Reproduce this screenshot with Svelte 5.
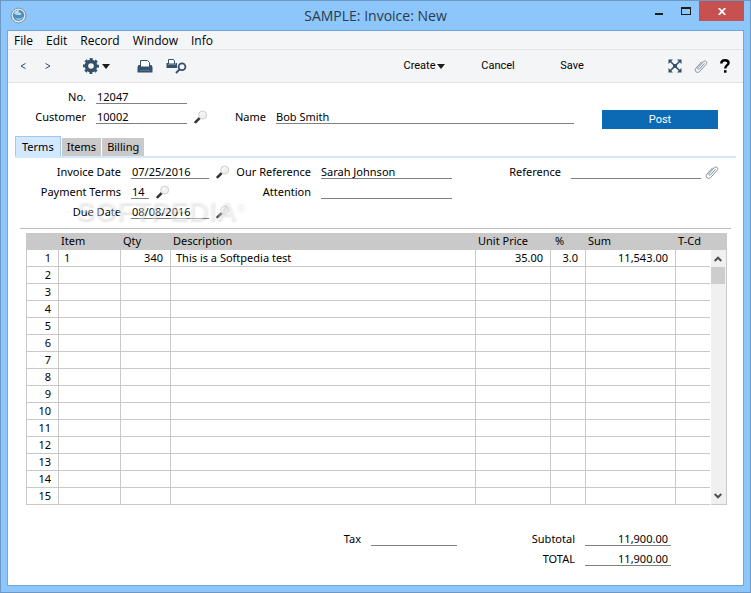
<script lang="ts">
    const menus = ["File", "Edit", "Record", "Window", "Info"];
    const tabs = ["Terms", "Items", "Billing"];
    const totalRows = 15;

    let activeTab = $state("Terms");

    let invoice = $state({
        number: "12047",
        customer: "10002",
        name: "Bob Smith",
        date: "07/25/2016",
        terms: "14",
        due: "08/08/2016",
        ourReference: "Sarah Johnson",
        attention: "",
        reference: "",
        tax: "",
        subtotal: "11,900.00",
        total: "11,900.00",
    });

    const lines = [
        {
            item: "1",
            qty: "340",
            description: "This is a Softpedia test",
            price: "35.00",
            percent: "3.0",
            sum: "11,543.00",
            code: "",
        },
    ];

    const rows = Array.from({ length: totalRows }, (_, i) => lines[i] ?? null);
</script>

{#snippet lens(label)}
    <button class="lens" aria-label={label}>
        <svg width="14" height="14" viewBox="0 0 14 14">
            <path d="M1.6 12.2 5.6 8.2" stroke="#333" stroke-width="2.6" stroke-linecap="round" />
            <circle cx="8.7" cy="5" r="4" fill="#f1f1f1" stroke="#d0d0d0" />
            <path d="M6.6 4.6a2.4 2.4 0 0 1 2.6-1.9" fill="none" stroke="#fff" />
        </svg>
    </button>
{/snippet}

{#snippet clip()}
    <svg width="14" height="15" viewBox="0 0 14 15" fill="none" stroke="#8390a0" stroke-linecap="round">
        <path d="M10.2 4.6 5.4 10c-.9 1-2.300-.2-1.400-1.300l5.300-6c1.800-1.900 4.700.4 2.900 2.500l-6.400 7.200c-2.500 2.700-6.200-.5-3.800-3.300L7.400 3" />
    </svg>
{/snippet}

{#snippet caret()}
    <svg width="8" height="5" viewBox="0 0 8 5"><path d="M0 0h8L4 5z" fill="#1c1c1c" /></svg>
{/snippet}

<div class="window">
    <header class="titlebar">
        <svg class="logo" width="17" height="17" viewBox="0 0 17 17">
            <circle cx="8.5" cy="8.5" r="7.4" fill="#dfe6ec" stroke="#8593a0" />
            <circle cx="8.5" cy="8.3" r="5.6" fill="#4a8fc0" />
            <path d="M4 6c1-2 3-3 5-3-1 2 0 3 2 3 1 1 0 2-1 2-3 0-5 0-6-2z" fill="#b4dbf0" />
            <path d="M5 10c2 2 5 2 8 0-1 3-6 5-8 0z" fill="#9acbe9" />
        </svg>
        <h1>SAMPLE: Invoice: New</h1>
        <div class="controls">
            <button class="control" aria-label="Minimize">
                <svg width="10" height="10" viewBox="0 0 10 10"><path d="M1 7h8v2H1z" fill="#1c1c1c" /></svg>
            </button>
            <button class="control" aria-label="Maximize">
                <svg width="10" height="10" viewBox="0 0 10 10"><path d="M0 1h10v8H0zM1 3v5h8V3z" fill="#1c1c1c" fill-rule="evenodd" /></svg>
            </button>
            <button class="close" aria-label="Close">
                <svg width="8" height="7" viewBox="0 0 8 7"><path d="M.7 0 7.3 7M7.3 0 .7 7" stroke="#fff" stroke-width="1.8" /></svg>
            </button>
        </div>
    </header>

    <main>
        <nav class="menubar">
            {#each menus as menu}
                <button>{menu}</button>
            {/each}
        </nav>

        <div class="toolbar">
            <div class="nav">
                <button aria-label="Previous">
                    <svg width="6" height="6" viewBox="0 0 6 6"><path d="M5.5.5 1 3l4.500 2.500" fill="none" stroke="#34506b" /></svg>
                </button>
                <button aria-label="Next">
                    <svg width="6" height="6" viewBox="0 0 6 6"><path d="M.5.5 5 3 .5 5.500" fill="none" stroke="#34506b" /></svg>
                </button>
            </div>
            <button class="gear" aria-label="Options">
                <svg width="16" height="16" viewBox="0 0 16 16" fill="none" stroke="#34506b">
                    <circle cx="8" cy="8" r="4.6" stroke-width="3.6" />
                    <circle cx="8" cy="8" r="6.9" stroke-width="2.2" stroke-dasharray="2.9 2.519" stroke-dashoffset="1.45" />
                </svg>
                {@render caret()}
            </button>
            <button class="print" aria-label="Print">
                <svg width="16" height="13" viewBox="0 0 16 13">
                    <path d="M3.500 7V.5h7l2 2V7z" fill="#fff" stroke="#34506b" />
                    <path d="M1.500 5H3v2h10V5h1.500L15.500 7v5.500H.5V7z" fill="#34506b" />
                    <path d="M3 10.500h10" stroke="#5d758b" />
                </svg>
            </button>
            <button aria-label="Print preview">
                <svg width="21" height="15" viewBox="0 0 21 15">
                    <path d="M2.500 5V.5h5l1 1.500v3z" fill="#fff" stroke="#34506b" />
                    <path d="M.5 4H2v1.500h7.500V4H11v5H.5z" fill="#34506b" />
                    <circle cx="16" cy="7.8" r="3.4" fill="#f4f5f7" stroke="#34506b" stroke-width="1.8" />
                    <path d="m13.500 10.400-3.500 3.600" stroke="#34506b" stroke-width="2" />
                </svg>
            </button>
            <div class="actions">
                <button class="create">Create{@render caret()}</button>
                <button>Cancel</button>
                <button>Save</button>
            </div>
            <div class="tools">
                <button aria-label="Expand">
                    <svg width="14" height="14" viewBox="0 0 14 14">
                        <path d="M2 2l10 10M12 2 2 12" stroke="#34506b" stroke-width="1.6" />
                        <path d="M.5.5H5L.5 5zM13.500.5V5L9 .5zM.5 13.500V9L5 13.500zM13.500 13.500H9L13.500 9z" fill="#34506b" />
                        <path d="M5 5h4v4H5z" fill="#34506b" />
                    </svg>
                </button>
                <button aria-label="Attachments">{@render clip()}</button>
                <button aria-label="Help">
                    <svg width="10" height="14" viewBox="0 0 10 14">
                        <path d="M1.300 4.500C1.300 2.200 3 1.200 5 1.200c2.200 0 3.600 1.100 3.600 2.800C8.600 6.200 5.200 6.200 5.200 9.500" fill="none" stroke="#000" stroke-width="2.4" />
                        <path d="M4 11.200h2.500v2.500H4z" />
                    </svg>
                </button>
            </div>
        </div>

        <section class="head">
            <div class="fields">
                <div class="row">
                    <label for="number">No.</label>
                    <input id="number" class="code" bind:value={invoice.number} />
                </div>
                <div class="row">
                    <label for="customer">Customer</label>
                    <input id="customer" class="code" bind:value={invoice.customer} />
                    {@render lens("Find customer")}
                    <label for="name" class="name">Name</label>
                    <input id="name" class="grow" bind:value={invoice.name} />
                </div>
            </div>
            <button class="post">Post</button>
        </section>

        <div class="tabs" role="tablist">
            {#each tabs as tab}
                <button
                    role="tab"
                    aria-selected={activeTab === tab}
                    class:active={activeTab === tab}
                    onclick={() => (activeTab = tab)}>{tab}</button
                >
            {/each}
        </div>

        <section class="terms">
            <div class="dates">
                <div class="row">
                    <label for="date">Invoice Date</label>
                    <input id="date" class="date" bind:value={invoice.date} />
                    {@render lens("Pick invoice date")}
                </div>
                <div class="row">
                    <label for="terms">Payment Terms</label>
                    <input id="terms" class="days" bind:value={invoice.terms} />
                    {@render lens("Find payment terms")}
                </div>
                <div class="row">
                    <label for="due">Due Date</label>
                    <input id="due" class="date" bind:value={invoice.due} />
                    {@render lens("Pick due date")}
                </div>
                <div class="watermark" aria-hidden="true">SOFTPEDIA<sup>®</sup></div>
            </div>
            <div class="contacts">
                <div class="row">
                    <label for="our">Our Reference</label>
                    <input id="our" class="grow" bind:value={invoice.ourReference} />
                </div>
                <div class="row">
                    <label for="attention">Attention</label>
                    <input id="attention" class="grow" bind:value={invoice.attention} />
                </div>
            </div>
            <div class="reference">
                <div class="row">
                    <label for="reference">Reference</label>
                    <input id="reference" class="grow" bind:value={invoice.reference} />
                    <button class="attach" aria-label="Attach file">{@render clip()}</button>
                </div>
            </div>
        </section>

        <div class="grid">
            <table>
                <colgroup>
                    <col class="w-no" />
                    <col class="w-item" />
                    <col class="w-qty" />
                    <col />
                    <col class="w-price" />
                    <col class="w-percent" />
                    <col class="w-sum" />
                    <col class="w-code" />
                </colgroup>
                <thead>
                    <tr>
                        <th></th>
                        <th>Item</th>
                        <th>Qty</th>
                        <th>Description</th>
                        <th>Unit Price</th>
                        <th class="percent">%</th>
                        <th>Sum</th>
                        <th>T-Cd</th>
                    </tr>
                </thead>
                <tbody>
                    {#each rows as row, i}
                        <tr>
                            <td class="num">{i + 1}</td>
                            <td>{row?.item}</td>
                            <td class="num">{row?.qty}</td>
                            <td>{row?.description}</td>
                            <td class="num">{row?.price}</td>
                            <td class="num">{row?.percent}</td>
                            <td class="num">{row?.sum}</td>
                            <td>{row?.code}</td>
                        </tr>
                    {/each}
                </tbody>
            </table>
            <div class="side">
                <div class="corner"></div>
                <div class="scrollbar">
                    <button aria-label="Scroll up">
                        <svg width="8" height="6" viewBox="0 0 8 6"><path d="M.7 5 4 1.700 7.300 5" fill="none" stroke="#505050" stroke-width="2" /></svg>
                    </button>
                    <div class="thumb"></div>
                    <button class="down" aria-label="Scroll down">
                        <svg width="8" height="6" viewBox="0 0 8 6"><path d="M.7 1 4 4.300 7.300 1" fill="none" stroke="#505050" stroke-width="2" /></svg>
                    </button>
                </div>
            </div>
        </div>

        <section class="totals">
            <div class="row">
                <label for="tax">Tax</label>
                <input id="tax" class="amount" bind:value={invoice.tax} />
            </div>
            <div class="sums">
                <div class="row">
                    <label for="subtotal">Subtotal</label>
                    <input id="subtotal" class="amount" bind:value={invoice.subtotal} />
                </div>
                <div class="row">
                    <label for="total">TOTAL</label>
                    <input id="total" class="amount" bind:value={invoice.total} />
                </div>
            </div>
        </section>
    </main>
</div>

<style>
    :global(body) {
        margin: 0;
    }

    .window {
        box-sizing: border-box;
        min-height: 100vh;
        display: flex;
        flex-direction: column;
        padding: 0 6px 6px;
        border: 1px solid #6c98c5;
        background: #8cc6fa;
        color: #000;
        font-family: "Noto Sans", sans-serif;
        font-size: 11px;
        line-height: 14px;
    }

    button {
        margin: 0;
        padding: 0;
        border: 0;
        background: none;
        color: inherit;
        font: inherit;
    }

    svg {
        display: block;
        flex: none;
    }

    .titlebar {
        height: 29px;
        display: grid;
        grid-template-columns: 1fr auto 1fr;
        align-items: center;
    }

    .logo {
        margin-left: 3px;
    }

    h1 {
        margin: 0;
        color: #2b3b4b;
        font-family: "Open Sans", sans-serif;
        font-size: 14px;
        font-weight: 400;
        line-height: 20px;
    }

    .controls {
        display: flex;
        justify-content: flex-end;
        align-self: start;
    }

    .control {
        width: 27px;
        height: 20px;
        display: grid;
        place-items: center;
    }

    .close {
        width: 45px;
        height: 20px;
        display: grid;
        place-items: center;
        background: #c75050;
    }

    main {
        flex: 1;
        border: 1px solid #6fa6db;
        background: #fff;
    }

    .menubar {
        height: 18px;
        display: flex;
        align-items: flex-end;
        gap: 13px;
        padding-left: 6px;
        border-bottom: 1px solid #e2e4e7;
        background: #f4f5f7;
        font-family: "Open Sans", sans-serif;
        font-size: 12px;
        line-height: 16px;
    }

    .toolbar {
        height: 32px;
        display: flex;
        align-items: center;
        padding: 0 13px 0 12px;
        border-bottom: 1px solid #dfe1e4;
        background: #f4f5f7;
    }

    .nav {
        display: flex;
        gap: 19px;
        margin-right: 32px;
    }

    .gear {
        display: flex;
        align-items: center;
        gap: 3px;
    }

    .print {
        margin: 0 13px 0 27px;
    }

    .actions {
        flex: 1;
        display: flex;
        justify-content: flex-end;
        margin-right: 59px;
        font-family: Roboto, sans-serif;
        line-height: 16px;
    }

    .actions button {
        width: 74px;
    }

    .create {
        display: flex;
        align-items: center;
        justify-content: center;
        gap: 1px;
    }

    .tools {
        display: flex;
        align-items: center;
        gap: 12px;
    }

    .row {
        height: 14px;
        display: flex;
        align-items: center;
    }

    .row + .row {
        margin-top: 6px;
    }

    label {
        flex: none;
        margin-right: 10px;
        text-align: right;
        white-space: nowrap;
    }

    input {
        box-sizing: border-box;
        min-width: 0;
        height: 14px;
        padding: 0 1px;
        border: 0;
        border-bottom: 1px solid #808080;
        border-radius: 0;
        outline: 0;
        background: transparent;
        color: #000;
        font: inherit;
    }

    .grow {
        flex: 1;
        width: 0;
        padding: 0;
    }

    .lens {
        margin-left: 7px;
    }

    .head {
        display: flex;
        align-items: flex-end;
        padding: 7px 25px 7px 0;
    }

    .fields {
        flex: 1;
        padding-bottom: 5px;
    }

    .fields label {
        width: 78px;
    }

    .fields .name {
        width: 58px;
    }

    .code {
        width: 91px;
    }

    .post {
        width: 116px;
        height: 19px;
        margin-left: 28px;
        background: #0c69b3;
        color: #fff;
        font-family: Roboto, sans-serif;
    }

    .tabs {
        display: flex;
        align-items: flex-end;
        gap: 1px;
        margin: 0 7px;
        border-bottom: 2px solid #d2e8ff;
    }

    .tabs button {
        height: 18px;
        padding: 0 5px;
        background: #c9c9c9;
    }

    .tabs .active {
        height: 20px;
        padding: 0 6px;
        border: 1px solid #9fc9f3;
        border-bottom: 0;
        background: #d2e8ff;
    }

    .terms {
        display: flex;
        padding: 7px 24px 9px 0;
    }

    .dates {
        position: relative;
        flex: none;
        width: 222px;
    }

    .dates label {
        width: 113px;
    }

    .date {
        width: 78px;
    }

    .days {
        width: 18px;
    }

    .contacts {
        flex: 222;
    }

    .contacts label {
        width: 81px;
    }

    .reference {
        flex: 267;
    }

    .reference label {
        width: 109px;
    }

    .attach {
        margin-left: 4px;
    }

    .watermark {
        position: absolute;
        top: 30px;
        left: 68px;
        color: rgba(255, 255, 255, 0.4);
        font-family: "Liberation Sans", sans-serif;
        font-size: 28px;
        font-weight: 700;
        line-height: 32px;
        text-shadow: 1px 2px 2px rgba(0, 0, 0, 0.1);
        white-space: nowrap;
        pointer-events: none;
    }

    .watermark sup {
        font-size: 10px;
        line-height: 0;
    }

    .grid {
        display: flex;
        margin: 0 12px;
        padding: 4px 4px 0 6px;
        border-top: 1px solid #bdbdbd;
    }

    table {
        flex: 1;
        width: 0;
        table-layout: fixed;
        border-spacing: 0;
    }

    th,
    td {
        box-sizing: border-box;
        height: 17px;
        padding: 0 7px 0 5px;
        line-height: 16px;
        text-align: left;
        vertical-align: top;
        white-space: nowrap;
    }

    th {
        padding: 0 2px;
        background: #c9c9c9;
        font-weight: 400;
    }

    th.percent {
        padding-left: 4px;
    }

    td {
        border-right: 1px solid #c9c9c9;
        border-bottom: 1px solid #c9c9c9;
    }

    td:first-child {
        border-left: 1px solid #c9c9c9;
    }

    td:last-child {
        border-right: 0;
    }

    .num {
        text-align: right;
    }

    .w-no {
        width: 33px;
    }

    .w-item {
        width: 62px;
    }

    .w-qty {
        width: 50px;
    }

    .w-price {
        width: 75px;
    }

    .w-percent {
        width: 35px;
    }

    .w-sum {
        width: 90px;
    }

    .w-code {
        width: 34px;
    }

    .side {
        width: 17px;
        display: flex;
        flex-direction: column;
    }

    .corner {
        height: 17px;
        background: #c9c9c9;
    }

    .scrollbar {
        flex: 1;
        display: flex;
        flex-direction: column;
        margin-left: 1px;
        border-right: 1px solid #c9c9c9;
        border-bottom: 1px solid #c9c9c9;
        background: #f0f0f0;
    }

    .scrollbar button {
        height: 17px;
        display: grid;
        place-items: center;
        margin-right: 1px;
    }

    .scrollbar .down {
        margin-top: auto;
    }

    .thumb {
        height: 17px;
        margin-right: 1px;
        background: #cdcdcd;
    }

    .totals {
        display: flex;
        justify-content: flex-end;
        gap: 39px;
        padding: 27px 72px 19px 0;
    }

    .sums label {
        width: 79px;
    }

    .amount {
        width: 86px;
        padding-right: 3px;
        text-align: right;
    }
</style>
